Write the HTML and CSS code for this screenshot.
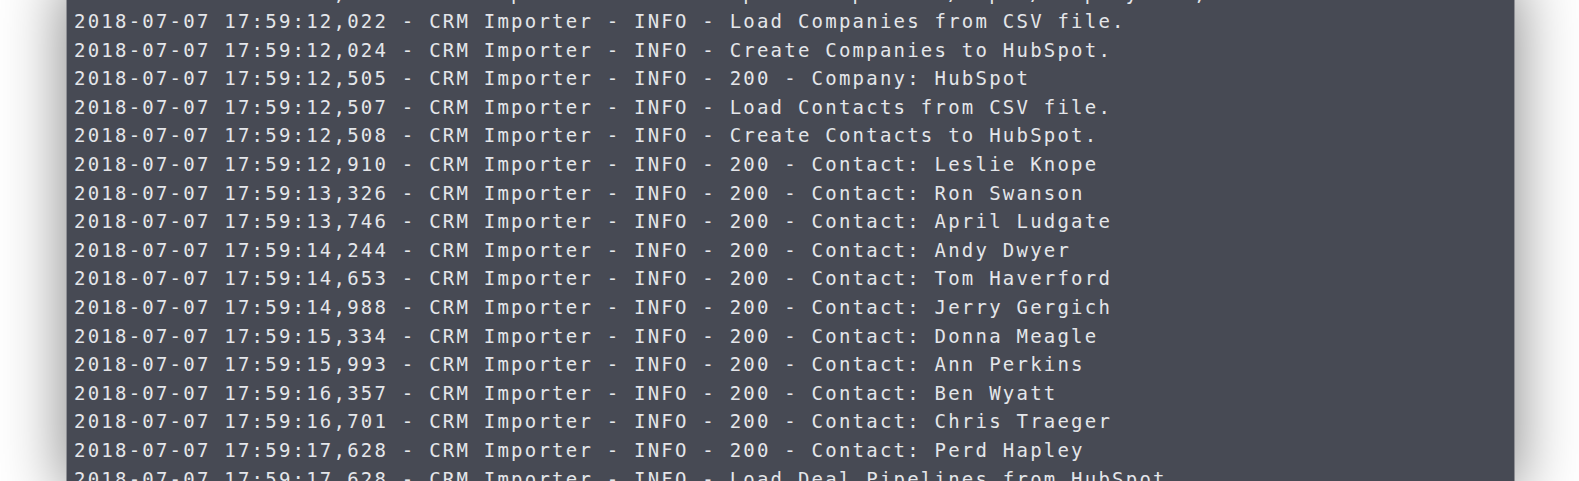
FILE: index.html
```html
<!DOCTYPE html>
<html>
<head>
<meta charset="utf-8">
<link rel="stylesheet" href="styles.css">
</head>
<body>
<div class="stage">
  <div class="terminal">
    <div class="line">2018-07-07 17:59:12,021 - CRM Importer - INFO - Open CSV path: ./input/company.csv, ok</div>
    <div class="line">2018-07-07 17:59:12,022 - CRM Importer - INFO - Load Companies from CSV file.</div>
    <div class="line">2018-07-07 17:59:12,024 - CRM Importer - INFO - Create Companies to HubSpot.</div>
    <div class="line">2018-07-07 17:59:12,505 - CRM Importer - INFO - 200 - Company: HubSpot</div>
    <div class="line">2018-07-07 17:59:12,507 - CRM Importer - INFO - Load Contacts from CSV file.</div>
    <div class="line">2018-07-07 17:59:12,508 - CRM Importer - INFO - Create Contacts to HubSpot.</div>
    <div class="line">2018-07-07 17:59:12,910 - CRM Importer - INFO - 200 - Contact: Leslie Knope</div>
    <div class="line">2018-07-07 17:59:13,326 - CRM Importer - INFO - 200 - Contact: Ron Swanson</div>
    <div class="line">2018-07-07 17:59:13,746 - CRM Importer - INFO - 200 - Contact: April Ludgate</div>
    <div class="line">2018-07-07 17:59:14,244 - CRM Importer - INFO - 200 - Contact: Andy Dwyer</div>
    <div class="line">2018-07-07 17:59:14,653 - CRM Importer - INFO - 200 - Contact: Tom Haverford</div>
    <div class="line">2018-07-07 17:59:14,988 - CRM Importer - INFO - 200 - Contact: Jerry Gergich</div>
    <div class="line">2018-07-07 17:59:15,334 - CRM Importer - INFO - 200 - Contact: Donna Meagle</div>
    <div class="line">2018-07-07 17:59:15,993 - CRM Importer - INFO - 200 - Contact: Ann Perkins</div>
    <div class="line">2018-07-07 17:59:16,357 - CRM Importer - INFO - 200 - Contact: Ben Wyatt</div>
    <div class="line">2018-07-07 17:59:16,701 - CRM Importer - INFO - 200 - Contact: Chris Traeger</div>
    <div class="line">2018-07-07 17:59:17,628 - CRM Importer - INFO - 200 - Contact: Perd Hapley</div>
    <div class="line">2018-07-07 17:59:17,628 - CRM Importer - INFO - Load Deal Pipelines from HubSpot.</div>
  </div>
</div>
</body>
</html>
```
FILE: styles.css
```css
html, body {
  margin: 0;
  padding: 0;
  background: #ffffff;
  overflow: hidden;
  height: 481px;
}
.stage {
  padding-left: 66px;
}
.terminal {
  width: 1449px;
  margin-top: -21.5px;
  padding-left: 7px;
  box-sizing: border-box;
  background: #474a54;
  border-left: 1px solid #8e8f94;
  border-right: 1px solid #8e8f94;
  box-shadow: 0 0 60px rgba(0, 0, 0, 0.5);
  color: #e4e6ea;
  font-family: "DejaVu Sans Mono", monospace;
  font-size: 19px;
  letter-spacing: 2.22px;
  line-height: 28.6px;
}
.line {
  height: 28.6px;
  white-space: pre;
}
```
